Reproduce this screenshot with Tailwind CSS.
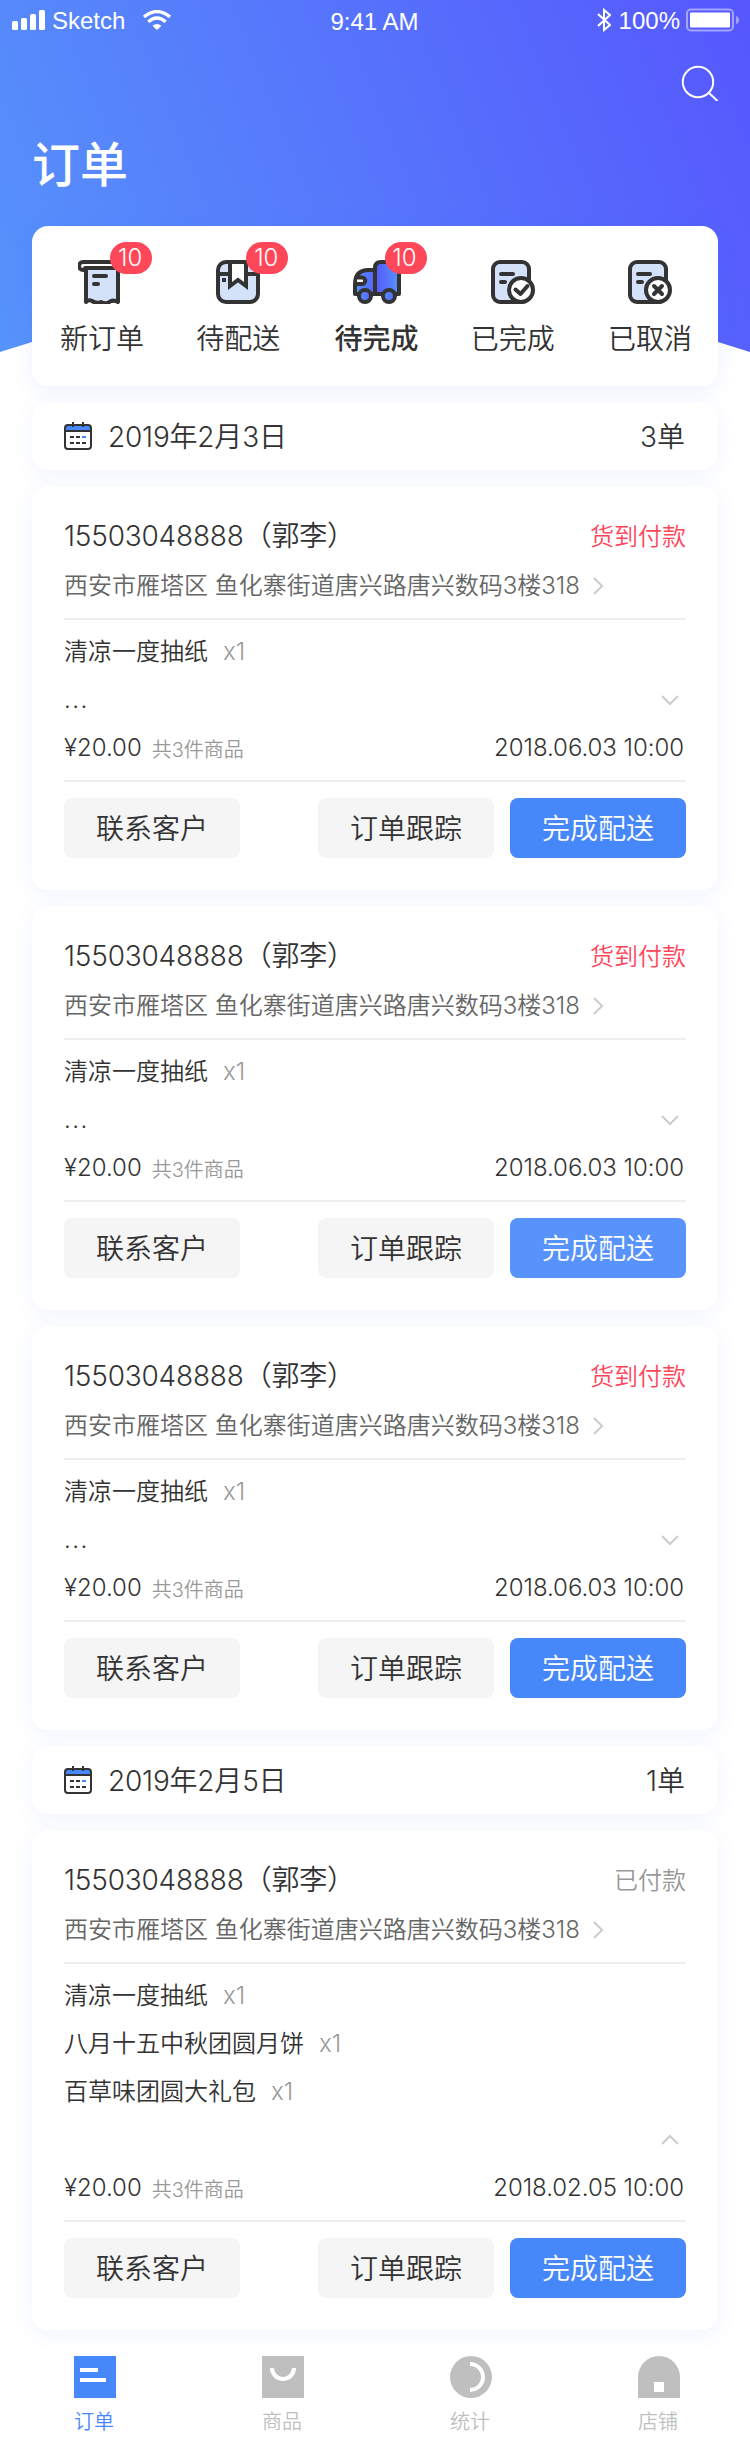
<!DOCTYPE html>
<html lang="zh-CN">
<head>
<meta charset="utf-8">
<title>订单</title>
<script src="https://cdn.jsdelivr.net/npm/@tailwindcss/browser@4"></script>
</head>
<body class="w-[750px] h-[2444px] overflow-hidden bg-white font-['Inter','Noto_Sans_CJK_SC',sans-serif] text-[#333] font-[350]">
<svg class="hidden">
  <symbol id="calendar" viewBox="0 0 28 28">
    <rect x="1" y="3" width="26" height="24" rx="3" fill="#fff"/>
    <path d="M1 9V6a3 3 0 0 1 3-3h20a3 3 0 0 1 3 3v3z" fill="#4687fa"/>
    <rect x="1" y="3" width="26" height="24" rx="3" fill="none" stroke="#333" stroke-width="2"/>
    <path d="M1 9h26M9 0v5M19 0v5" stroke="#333" stroke-width="2"/>
    <path d="M6 15h4M12 15h4M6 21h4M12 21h4M18 21h4" stroke="#333" stroke-width="2"/>
    <path d="M18 15h4" stroke="#4687fa" stroke-width="2"/>
  </symbol>
  <symbol id="chev" viewBox="0 0 18 18"><path d="M1 5l8 8 8-8" fill="none" stroke="#ccc" stroke-width="2"/></symbol>
</svg>

<div class="relative h-[2444px]">
  <div class="absolute inset-x-0 top-0 h-[352px] bg-[linear-gradient(68deg,#5693fb,#5657fd)] [clip-path:polygon(0_0,100%_0,100%_100%,50%_235px,0_100%)]"></div>

  <div class="relative flex flex-col">
    <!-- status bar -->
    <header class="grid h-10 grid-cols-3 items-center pl-3 pr-[11px] font-['Liberation_Sans',sans-serif] text-2xl font-normal text-white">
      <div class="flex items-center">
        <svg class="h-5 w-[33px]" viewBox="0 0 33 20" fill="#fff"><rect y="11" width="6" height="9" rx="1.5"/><rect x="9" y="8" width="6" height="12" rx="1.5"/><rect x="18" y="4" width="6" height="16" rx="1.5"/><rect x="27" width="6" height="20" rx="1.5"/></svg>
        <span class="ml-[7px] mt-[2px]">Sketch</span>
        <svg class="ml-[18px] h-5 w-7" viewBox="0 0 28 20"><g fill="none" stroke="#fff" stroke-width="3.4"><path d="M1 7Q14-3.800 27 7"/><path d="M5.300 11.700Q14 4.200 22.700 11.700"/></g><path d="M9.500 15.800Q14 12 18.500 15.800L14 20z" fill="#fff"/></svg>
      </div>
      <div class="mt-[3px] pr-[2px] text-center">9:41 AM</div>
      <div class="flex items-center justify-end">
        <svg class="h-6 w-[14px]" viewBox="0 0 14 24" fill="none" stroke="#fff" stroke-width="2"><path d="M1 6l12 11-6 5V2l6 5L1 18"/></svg>
        <span class="ml-2 mt-[2px]">100%</span>
        <svg class="ml-[6px] h-6 w-[53px]" viewBox="0 0 53 24"><rect x="1" y="1.500" width="46" height="21" rx="4" fill="none" stroke="#fff" stroke-opacity=".45" stroke-width="2"/><rect x="4" y="4.500" width="40" height="15" rx="1" fill="#fff"/><path d="M50 8q3 1 3 4t-3 4z" fill="#fff" fill-opacity=".45"/></svg>
      </div>
    </header>
    <div class="flex h-[186px] flex-col px-8 text-white">
      <svg class="mt-[25px] h-9 w-[37px] self-end" viewBox="0 0 37 36" fill="none" stroke="#fff" stroke-width="2" stroke-linecap="round"><circle cx="17" cy="17" r="15.200"/><path d="M28 28l8 7.500"/></svg>
      <h1 class="mt-[28px] text-[48px] leading-[72px] font-medium">订单</h1>
    </div>

    <main class="flex flex-col gap-4 px-8">
      <nav class="flex h-40 rounded-2xl bg-white pt-[34px] shadow-[0_4px_20px_rgba(70,115,255,0.1)]" id="stats">
        <div class="flex flex-1 flex-col items-center pl-[2px]">
          <div class="relative h-11 w-12">
            <svg class="h-11 w-12" viewBox="0 0 48 44" fill="none" stroke="#333" stroke-width="4" stroke-linecap="round" stroke-linejoin="round"><path d="M8 6v36q3-3 6-1 4.500 3 9 1 5 3 9-.5 4-2 8 .5V6z" fill="#d4e2f9"/><path d="M7 10H5a3.500 3.500 0 0 1 0-8h38a3.500 3.500 0 0 1 0 8h-2" fill="#fff"/><path d="M7 8h34M16 16h12M16 24h4"/></svg>
            <span class="absolute -top-[18px] left-8 h-8 w-[42px] rounded-full bg-[#ff475a] pr-[2px] text-center text-2xl leading-8 text-white">10</span>
          </div>
          <span class="mt-[14px] text-[28px] leading-[42px]">新订单</span>
        </div>
        <div class="flex flex-1 flex-col items-center">
          <div class="relative h-11 w-11">
            <svg class="size-11" viewBox="0 0 44 44" fill="none" stroke="#333" stroke-width="4"><rect x="2" y="2" width="40" height="40" rx="8" fill="#d4e2f9"/><path d="M2 14h40"/><path d="M14 2v24l8-6 8 6V2z" fill="#fff"/><path d="M6 20h4" stroke-width="4"/></svg>
            <span class="absolute -top-[18px] left-[30px] h-8 w-[42px] rounded-full bg-[#ff475a] pr-[2px] text-center text-2xl leading-8 text-white">10</span>
          </div>
          <span class="mt-[14px] text-[28px] leading-[42px]">待配送</span>
        </div>
        <div class="flex flex-1 flex-col items-center pl-[2px]">
          <div class="relative h-11 w-12">
            <svg class="h-11 w-12" viewBox="0 0 48 44" stroke="#333" stroke-width="4" stroke-linejoin="round"><defs><linearGradient id="ga"><stop stop-color="#5658fc"/><stop offset="1" stop-color="#5692fb"/></linearGradient><linearGradient id="gb"><stop stop-color="#5692fb"/><stop offset="1" stop-color="#5662fc"/></linearGradient></defs><path d="M22 10h-8Q2 11 2 24v10h20z" fill="url(#gb)"/><path d="M22 34V8q0-6 6-6h14q4 0 4 4v28z" fill="url(#ga)"/><path d="M4 17.500h5a3.200 3.200 0 0 1 0 6.400H4" fill="#fff"/><circle cx="12" cy="36" r="6" fill="url(#gb)"/><circle cx="36" cy="36" r="6" fill="url(#gb)"/></svg>
            <span class="absolute -top-[18px] left-8 h-8 w-[42px] rounded-full bg-[#ff475a] pr-[2px] text-center text-2xl leading-8 text-white">10</span>
          </div>
          <span class="mt-[14px] text-[28px] leading-[42px] font-medium">待完成</span>
        </div>
        <div class="flex flex-1 flex-col items-center">
          <svg class="size-11" viewBox="0 0 44 44" fill="none" stroke="#333" stroke-width="4" stroke-linecap="round" stroke-linejoin="round"><rect x="2" y="2" width="36" height="40" rx="7" fill="#d4e2f9"/><path d="M10 14h12M10 22h4"/><circle cx="30" cy="30" r="12" fill="#fff"/><path d="M24.500 29.500l5 4.500 7-8"/></svg>
          <span class="mt-[14px] text-[28px] leading-[42px]">已完成</span>
        </div>
        <div class="flex flex-1 flex-col items-center pl-px">
          <svg class="size-11" viewBox="0 0 44 44" fill="none" stroke="#333" stroke-width="4" stroke-linecap="round"><rect x="2" y="2" width="36" height="40" rx="7" fill="#d4e2f9"/><path d="M10 14h12M10 22h4"/><circle cx="30" cy="30" r="12" fill="#fff"/><path d="M26 26l8 8M34 26l-8 8"/></svg>
          <span class="mt-[14px] text-[28px] leading-[42px]">已取消</span>
        </div>
      </nav>
      <div class="contents" id="orders"></div>
    </main>

    <footer class="mt-[26px] flex text-xl leading-[30px] text-[#bfbfbf]">
      <div class="flex w-[188px] shrink-0 flex-col items-center text-[#4687fa]">
        <svg class="ml-[2px] size-[42px]" viewBox="0 0 42 42"><path d="M0 0h42v42H0z" fill="#4687fa"/><path d="M6 12h18v4H6zM6 22h26v4H6z" fill="#fff"/></svg><span class="mt-[9px]">订单</span>
      </div>
      <div class="flex w-[188px] shrink-0 flex-col items-center">
        <svg class="ml-[2px] size-[42px]" viewBox="0 0 42 42"><path d="M0 0h42v42H0z" fill="#bfbfbf"/><path d="M10 12a11 11 0 0 0 22 0" fill="none" stroke="#fff" stroke-width="4"/></svg><span class="mt-[9px]">商品</span>
      </div>
      <div class="flex w-[188px] shrink-0 flex-col items-center">
        <svg class="ml-[2px] size-[42px]" viewBox="0 0 42 42"><circle cx="21" cy="21" r="21" fill="#bfbfbf"/><path d="M20 8a13 13 0 0 1 0 26" fill="none" stroke="#fff" stroke-width="4"/></svg><span class="mt-[9px]">统计</span>
      </div>
      <div class="flex w-[186px] shrink-0 flex-col items-center pl-[2px]">
        <svg class="ml-[2px] size-[42px]" viewBox="0 0 42 42"><path d="M0 42V21a21 21 0 0 1 42 0v21z" fill="#bfbfbf"/><path d="M16 26h10v10H16z" fill="#fff"/></svg><span class="mt-[9px]">店铺</span>
      </div>
    </footer>
  </div>
</div>

<script>
const dateBar = (day, n) => `
  <section class="flex h-[68px] shrink-0 items-center rounded-2xl bg-white pl-8 pr-[33px] text-[28px] leading-[42px] shadow-[0_4px_20px_rgba(70,115,255,0.08)]">
    <svg class="size-7"><use href="#calendar"/></svg>
    <span class="ml-4 mt-px tracking-[-0.2px]">${day}</span><span class="ml-auto mt-px">${n}单</span>
  </section>`;
const order = (o) => `
  <section class="flex flex-col rounded-2xl bg-white px-8 pb-8 pt-[25px] text-2xl shadow-[0_4px_20px_rgba(70,115,255,0.08)]">
    <div class="flex h-[50px] items-center justify-between pt-[2px]"><span class="text-[28px] tracking-[-0.2px]">15503048888（郭李）</span><span class="mb-px ${o.paid ? 'text-[#999]' : 'text-[#ff475a]'}">${o.paid ? '已付款' : '货到付款'}</span></div>
    <div class="flex h-[50px] items-center text-[#666]"><span>西安市雁塔区 鱼化寨街道唐兴路唐兴数码3楼318</span><svg class="ml-[9px] size-[18px] -rotate-90"><use href="#chev"/></svg></div>
    <div class="mt-[7px] border-y-2 border-[#eee] py-2">
      ${o.items.map(i => `<div class="flex h-12 items-center"><span>${i}</span><span class="ml-[15px] text-[#999]">x1</span></div>`).join('')}
      <div class="flex h-12 items-center justify-between pr-[7px]"><span class="tracking-[1.5px]">${o.open ? '' : '...'}</span><svg class="size-[18px] ${o.open ? 'rotate-180' : ''}"><use href="#chev"/></svg></div>
      <div class="flex h-12 items-center"><span>¥20.00</span><span class="ml-[10px] mt-[3px] text-xl text-[#999]">共3件商品</span><span class="ml-auto mr-[2px] tracking-[-0.05px]">${o.time}</span></div>
    </div>
    <div class="mt-4 flex h-[60px] gap-4 text-[28px] leading-[62px] text-center">
      <button class="mr-auto w-44 rounded-lg bg-[#f5f5f5]">联系客户</button>
      <button class="w-44 rounded-lg bg-[#f5f5f5]">订单跟踪</button>
      <button class="w-44 rounded-lg text-white ${o.light ? 'bg-[#5892fb]' : 'bg-[#4687fa]'}">完成配送</button>
    </div>
  </section>`;
const tissue = { items: ['清凉一度抽纸'], time: '2018.06.03 10:00' };
document.getElementById('orders').innerHTML =
  dateBar('2019年2月3日', 3) + order(tissue) + order({ ...tissue, light: true }) + order(tissue) +
  dateBar('2019年2月5日', 1) +
  order({ items: ['清凉一度抽纸', '八月十五中秋团圆月饼', '百草味团圆大礼包'], time: '2018.02.05 10:00', paid: true, open: true });
</script>
</body>
</html>
